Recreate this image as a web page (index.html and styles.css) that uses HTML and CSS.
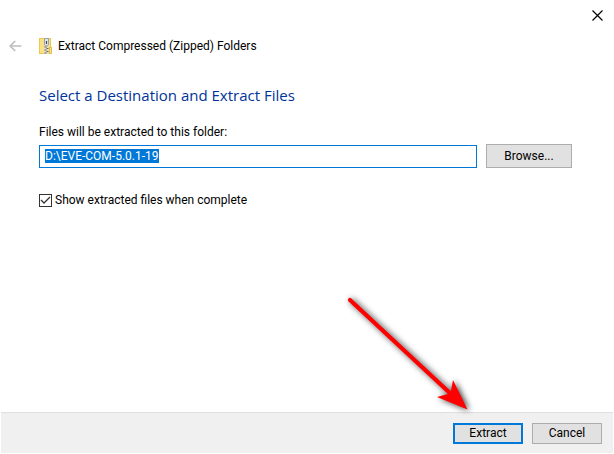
FILE: index.html
```html
<!DOCTYPE html>
<html lang="en">
<head>
  <meta charset="UTF-8">
  <meta name="viewport" content="width=device-width, initial-scale=1.0">
  <title>Extract Compressed (Zipped) Folders</title>
  <link rel="stylesheet" href="styles.css">
</head>
<body>
  <form class="dialog" id="extractForm">
    <div class="titlebar">
      <button type="button" class="icon-button close" aria-label="Close">
        <svg width="11" height="11" viewBox="0 0 11 11">
          <path d="M0.5 0.5 L10.5 10.5 M10.5 0.5 L0.5 10.5" stroke="#000" stroke-width="1.2" fill="none"/>
        </svg>
      </button>
    </div>

    <header class="header">
      <button type="button" class="icon-button back" aria-label="Back" disabled>
        <svg width="13" height="12" viewBox="0 0 13 12">
          <path d="M12.5 6 H1.5 M6.2 1 L1.2 6 L6.2 11" stroke="#bfbfbf" stroke-width="1.7" fill="none"/>
        </svg>
      </button>
      <svg class="zip-icon" width="13" height="16" viewBox="0 0 13 16">
        <rect x="0.5" y="0.5" width="11" height="15" fill="#fbe08a" stroke="#ecc94b"/>
        <rect x="10.5" y="9.5" width="2" height="6" fill="#fbe08a" stroke="#e6bf45"/>
        <rect x="5" y="8" width="5" height="8" fill="#e3dcc0"/>
        <path d="M5.5 9h2 M7.5 10.5h2 M5.5 12h2 M7.5 13.5h2 M5.5 15h2" stroke="#666" stroke-width="1"/>
        <path d="M5.500 0.500h4v6l-1 1.500h-2l-1 -1.500z" fill="#e1e6e9" stroke="#98a1a6"/>
        <path d="M7.500 3v3" stroke="#3f474c" stroke-width="1.200"/>
      </svg>
      <span>Extract Compressed (Zipped) Folders</span>
    </header>

    <main class="content">
      <h1>Select a Destination and Extract Files</h1>
      <label for="destination">Files will be extracted to this folder:</label>
      <div class="path-row">
        <input type="text" id="destination" name="destination" value="D:\EVE-COM-5.0.1-19" spellcheck="false">
        <button type="button" class="btn browse">Browse...</button>
      </div>
      <div class="check-row">
        <input type="checkbox" id="showFiles" name="showFiles" checked>
        <label for="showFiles">Show extracted files when complete</label>
      </div>
    </main>

    <footer class="footer">
      <svg class="arrow" width="140" height="130" viewBox="0 0 140 130">
        <path d="M10 10 L112 105" stroke="#f00" stroke-width="4.2" stroke-linecap="round"/>
        <path d="M127.500 119.500 L97 107 L108 104 L111 101 L113 90 Z" fill="#f00"/>
      </svg>
      <button type="submit" class="btn primary">Extract</button>
      <button type="button" class="btn">Cancel</button>
    </footer>
  </form>

  <script>
    const destination = document.getElementById('destination');

    // Start with the whole path selected
    destination.focus();
    destination.select();

    document.getElementById('extractForm').addEventListener('submit', event => {
      event.preventDefault();
    });
  </script>
</body>
</html>
```
FILE: styles.css
```css
* {
  box-sizing: border-box;
}
body {
  margin: 0;
  font-family: "Segoe UI", Roboto, sans-serif;
  font-size: 12px;
  line-height: 16px;
  color: #000;
  background: #fff;
}
button,
input {
  font: inherit;
  color: inherit;
}
.dialog {
  display: flex;
  flex-direction: column;
  min-height: 100vh;
  padding: 1px;
}
.titlebar {
  display: flex;
  justify-content: flex-end;
  height: 28px;
  padding-right: 10px;
}
.icon-button {
  display: flex;
  align-items: center;
  justify-content: center;
  padding: 0;
  border: none;
  background: none;
}
.close {
  width: 12px;
}
.header {
  display: flex;
  align-items: center;
  height: 33px;
  padding-left: 8px;
}
.back {
  width: 13px;
  margin-right: 17px;
}
.zip-icon {
  margin-right: 6px;
}
.content {
  flex: 1;
  padding: 21px 41px 0 38px;
}
h1 {
  margin: 0 0 17px;
  font-family: "Segoe UI", "Open Sans", sans-serif;
  font-size: 15px;
  font-weight: normal;
  line-height: 24px;
  color: #003399;
}
.content > label {
  display: block;
}
.path-row {
  display: flex;
  align-items: center;
  gap: 9px;
  margin-top: 4px;
}
.path-row input {
  flex: 1;
  min-width: 0;
  height: 23px;
  padding: 0 5px;
  border: 1px solid #0078d7;
  outline: none;
  background: #fff;
}
.path-row input::selection {
  color: #fff;
  background: #0078d7;
}
.btn {
  width: 70px;
  height: 21px;
  padding: 0;
  border: 1px solid #adadad;
  background: #e1e1e1;
  line-height: 16px;
}
.browse {
  width: 86px;
  height: 24px;
}
.primary {
  border: 2px solid #0078d7;
}
.check-row {
  display: flex;
  align-items: center;
  gap: 3px;
  margin-top: 24px;
}
.check-row input {
  appearance: none;
  width: 13px;
  height: 13px;
  margin: 0;
  border: 1px solid #333;
  background: #fff;
}
.check-row input:checked {
  background: #fff url('data:image/svg+xml,<svg xmlns="http://www.w3.org/2000/svg" viewBox="0 0 11 11"><path d="M1 5 L4 8 L10 2" fill="none" stroke="%23333" stroke-width="1.300"/></svg>');
}
.footer {
  position: relative;
  display: flex;
  align-items: center;
  justify-content: flex-end;
  gap: 9px;
  height: 41px;
  padding-right: 11px;
  border-top: 1px solid #dfdfdf;
  background: #f0f0f0;
}
/* Pointer that lies over the page and ends at the Extract button */
.arrow {
  position: absolute;
  right: 133px;
  bottom: 33px;
  pointer-events: none;
  filter: drop-shadow(2px 1px 3px rgba(0, 0, 0, 0.8));
}
```
